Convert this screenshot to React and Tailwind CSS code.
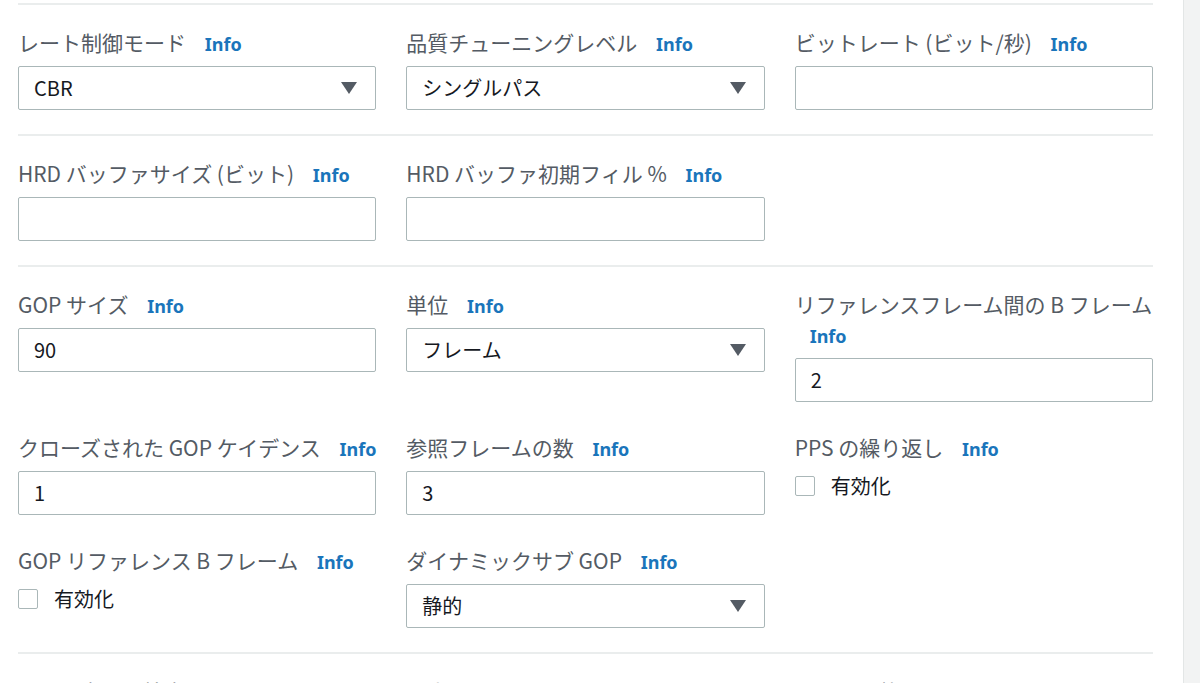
import React from "react";

const jp = "font-['Noto_Sans_CJK_JP','Noto_Sans',sans-serif]";

function Label({ text }) {
  return (
    <div className={`${jp} h-[30px] whitespace-nowrap text-[21px] leading-[30px] text-[#545b64]`}>
      <span>{text}</span>{" "}
      <span className="ml-[14px] font-['Noto_Sans',sans-serif] text-[18px] font-bold leading-none text-[#1a75bb]">
        Info
      </span>
    </div>
  );
}

function WrapLabel({ text }) {
  return (
    <div className={`${jp} text-[21px] leading-[30px] text-[#545b64]`}>
      <span className="whitespace-nowrap">{text}</span>
      <div className="h-[30px] pl-[15px]">
        <span className="font-['Noto_Sans',sans-serif] text-[18px] font-bold leading-none text-[#1a75bb]">
          Info
        </span>
      </div>
    </div>
  );
}

function TextInput({ value }) {
  return (
    <div
      className={`${jp} mt-[9px] flex h-[44px] items-center rounded-[2px] border border-[#aab7b8] bg-white px-[15px] text-[20px] text-[#16191f]`}
    >
      {value}
    </div>
  );
}

function Select({ value }) {
  return (
    <div
      className={`${jp} mt-[9px] flex h-[44px] items-center justify-between rounded-[2px] border border-[#aab7b8] bg-white pl-[15px] pr-[18px] text-[20px] text-[#16191f]`}
    >
      <span>{value}</span>
      <svg width="16" height="12" viewBox="0 0 16 12">
        <path d="M0 0 H16 L8 12 Z" fill="#545b64" />
      </svg>
    </div>
  );
}

function Checkbox() {
  return (
    <div className={`${jp} mt-[14px] flex h-[20px] items-center gap-[16px] text-[20px] leading-[20px] text-[#16191f]`}>
      <div className="h-[20px] w-[20px] rounded-[2px] border border-[#aab7b8] bg-white" />
      <span>有効化</span>
    </div>
  );
}

function Field({ label, children, wrap }) {
  return (
    <div>
      {wrap ? <WrapLabel text={label} /> : <Label text={label} />}
      {children}
    </div>
  );
}

function Divider() {
  return <div className="h-[2px] bg-[#eaeded]" />;
}

export default function App() {
  return (
    <div className="flex h-[683px] w-[1200px] overflow-hidden bg-white">
      <div className="flex-1 pl-[18px] pr-[30px] pt-[3px]">
        <Divider />
        <div className="grid grid-cols-3 items-start gap-x-[30px] pb-[24px] pt-[22px]">
          <Field label="レート制御モード">
            <Select value="CBR" />
          </Field>
          <Field label="品質チューニングレベル">
            <Select value="シングルパス" />
          </Field>
          <Field label="ビットレート (ビット/秒)">
            <TextInput value="" />
          </Field>
        </div>
        <Divider />
        <div className="grid grid-cols-3 items-start gap-x-[30px] pb-[24px] pt-[22px]">
          <Field label="HRD バッファサイズ (ビット)">
            <TextInput value="" />
          </Field>
          <Field label="HRD バッファ初期フィル %">
            <TextInput value="" />
          </Field>
          <div />
        </div>
        <Divider />
        <div className="grid grid-cols-3 items-start gap-x-[30px] gap-y-[30px] pb-[24px] pt-[22px]">
          <Field label="GOP サイズ">
            <TextInput value="90" />
          </Field>
          <Field label="単位">
            <Select value="フレーム" />
          </Field>
          <Field label="リファレンスフレーム間の B フレーム" wrap>
            <TextInput value="2" />
          </Field>
          <Field label="クローズされた GOP ケイデンス">
            <TextInput value="1" />
          </Field>
          <Field label="参照フレームの数">
            <TextInput value="3" />
          </Field>
          <Field label="PPS の繰り返し">
            <Checkbox />
          </Field>
          <Field label="GOP リファレンス B フレーム">
            <Checkbox />
          </Field>
          <Field label="ダイナミックサブ GOP">
            <Select value="静的" />
          </Field>
          <div />
        </div>
        <Divider />
        <div className="grid grid-cols-3 items-start gap-x-[30px] pt-[22px]">
          <Field label="シーン変更の検出">
            <Checkbox />
          </Field>
          <Field label="最小 I 間隔">
            <TextInput value="0" />
          </Field>
          <Field label="スライス数">
            <TextInput value="1" />
          </Field>
        </div>
      </div>
      <div className="w-[17px] border-l border-[#e3e6e6] bg-[#f2f3f3]" />
    </div>
  );
}
